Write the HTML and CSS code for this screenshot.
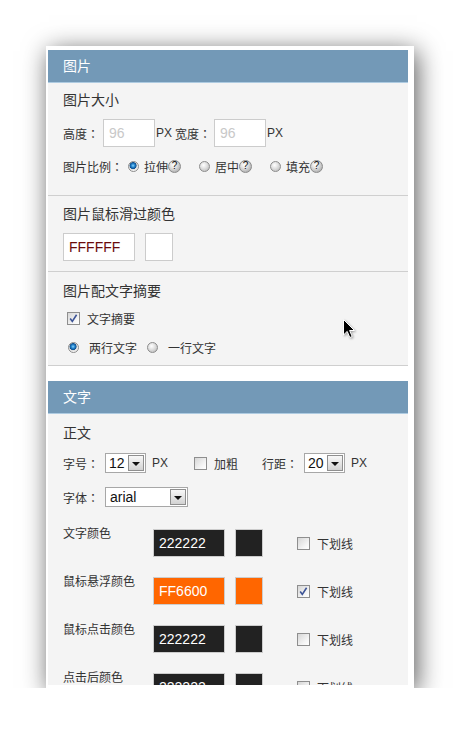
FILE: index.html
```html
<!DOCTYPE html>
<html lang="zh-CN">
<head>
<meta charset="utf-8">
<title>设置</title>
<link rel="stylesheet" href="styles.css">
</head>
<body>
<div class="frame">
  <div class="viewport">
    <section class="panel">
      <div class="panel-head">图片</div>
      <div class="panel-body">
        <div class="block block-size">
          <div class="title t-size">图片大小</div>
          <div class="row row-size">
            <span class="lbl lbl-h">高度<span class="colon">：</span></span>
            <input class="num" type="text" placeholder="96">
            <span class="unit">PX</span>
            <span class="lbl lbl-w">宽度<span class="colon">：</span></span>
            <input class="num" type="text" placeholder="96">
            <span class="unit">PX</span>
          </div>
          <div class="row row-ratio">
            <span class="lbl lbl-ratio">图片比例<span class="colon">：</span></span>
            <span class="opt"><span class="radio on"></span><span class="opt-txt">拉伸</span><span class="help">?</span></span>
            <span class="opt"><span class="radio"></span><span class="opt-txt">居中</span><span class="help">?</span></span>
            <span class="opt"><span class="radio"></span><span class="opt-txt">填充</span><span class="help">?</span></span>
          </div>
        </div>
        <div class="block block-hover">
          <div class="title t-hover">图片鼠标滑过颜色</div>
          <div class="row row-color">
            <input class="color-in light" type="text" value="FFFFFF">
            <span class="swatch sw-white"></span>
          </div>
        </div>
        <div class="block block-summary">
          <div class="title t-summary">图片配文字摘要</div>
          <div class="row row-check">
            <span class="check on"><svg viewBox="0 0 13 13" width="13" height="13"><path d="M3.2 6.6 L5.3 9.4 L9.6 2.8" fill="none" stroke="#3d5496" stroke-width="1.6"/></svg></span>
            <span class="check-txt">文字摘要</span>
          </div>
          <div class="row row-lines">
            <span class="radio on r-two"></span><span class="opt-txt2">两行文字</span>
            <span class="radio r-one"></span><span class="opt-txt2">一行文字</span>
          </div>
        </div>
      </div>
    </section>

    <section class="panel">
      <div class="panel-head">文字</div>
      <div class="panel-body">
        <div class="block block-text">
          <div class="title t-body">正文</div>
          <div class="row row-font">
            <span class="lbl">字号<span class="colon">：</span></span>
            <span class="select sel-s"><span class="sel-val">12</span><span class="sel-btn"><span class="tri"></span></span></span>
            <span class="unit unit-gap">PX</span>
            <span class="check bold-check"></span>
            <span class="check-txt">加粗</span>
            <span class="lbl lbl-lh">行距<span class="colon">：</span></span>
            <span class="select sel-s"><span class="sel-val">20</span><span class="sel-btn"><span class="tri"></span></span></span>
            <span class="unit unit-gap">PX</span>
          </div>
          <div class="row row-family">
            <span class="lbl">字体<span class="colon">：</span></span>
            <span class="select sel-l"><span class="sel-val">arial</span><span class="sel-btn"><span class="tri"></span></span></span>
          </div>
          <div class="color-rows">
            <div class="crow">
              <span class="clbl">文字颜色</span>
              <div class="cctl">
                <input class="color-in dark" type="text" value="222222">
                <span class="swatch sw-dark"></span>
                <span class="check ul-check"></span>
                <span class="check-txt">下划线</span>
              </div>
            </div>
            <div class="crow">
              <span class="clbl">鼠标悬浮颜色</span>
              <div class="cctl">
                <input class="color-in orange" type="text" value="FF6600">
                <span class="swatch sw-orange"></span>
                <span class="check ul-check on"><svg viewBox="0 0 13 13" width="13" height="13"><path d="M3.2 6.6 L5.3 9.4 L9.6 2.8" fill="none" stroke="#3d5496" stroke-width="1.6"/></svg></span>
                <span class="check-txt">下划线</span>
              </div>
            </div>
            <div class="crow">
              <span class="clbl">鼠标点击颜色</span>
              <div class="cctl">
                <input class="color-in dark" type="text" value="222222">
                <span class="swatch sw-dark"></span>
                <span class="check ul-check"></span>
                <span class="check-txt">下划线</span>
              </div>
            </div>
            <div class="crow">
              <span class="clbl">点击后颜色</span>
              <div class="cctl">
                <input class="color-in dark" type="text" value="222222">
                <span class="swatch sw-dark"></span>
                <span class="check ul-check"></span>
                <span class="check-txt">下划线</span>
              </div>
            </div>
          </div>
        </div>
      </div>
    </section>
  </div>
  <svg class="cursor" viewBox="0 0 13 20" width="13" height="20"><path d="M0.5 0.5 L0.5 16 L4.2 12.4 L6.8 18.5 L9.2 17.5 L6.6 11.5 L11.5 11.5 Z" fill="#000" stroke="#fff" stroke-width="1" stroke-linejoin="miter"/></svg>
</div>
</body>
</html>
```

FILE: styles.css
```css
html, body {
  margin: 0;
  padding: 0;
  background: #ffffff;
}

body {
  font-family: "Liberation Sans", "Noto Sans CJK SC", sans-serif;
  font-size: 12px;
  color: #333;
}

.frame {
  position: relative;
  margin: 46px 0 0 46px;
  width: 368px;
  height: 642px;
  box-sizing: border-box;
  padding: 4px 6px 3px 2px;
  background: #ffffff;
  box-shadow: 3px 5px 24px rgba(0, 0, 0, 0.65);
}

.viewport {
  height: 635px;
  overflow: hidden;
}

.panel {
  margin-bottom: 15px;
}

.panel-head {
  height: 32px;
  line-height: 32px;
  padding-left: 15px;
  background: #7399b7;
  border-bottom: 1px solid #aecbe1;
  color: #ffffff;
  font-size: 14px;
}

.panel-body {
  background: #f4f4f4;
}

.block {
  padding: 0 15px;
  border-bottom: 1px solid #cfcfcf;
}

.block-size { padding-bottom: 15px; }
.block-hover { padding-bottom: 10px; }
.block-summary { padding-bottom: 7px; }
.block-text { border-bottom: 0; }

.title {
  font-size: 14px;
  color: #333;
}

.t-size { height: 34px; line-height: 34px; }
.t-hover { height: 36px; line-height: 36px; }
.t-summary { height: 38px; line-height: 38px; }
.t-body { height: 38px; line-height: 38px; }

.row {
  display: flex;
  align-items: center;
}

.row-size { height: 28px; margin-top: 2px; }
.row-ratio { height: 28px; margin-top: 5px; }
.row-color { height: 28px; margin-top: 1px; }
.row-check { height: 16px; padding-left: 4px; }
.row-lines { height: 22px; margin-top: 10px; padding-left: 5px; }
.row-font { height: 22px; }
.row-family { height: 22px; margin-top: 12px; }

.lbl {
  white-space: nowrap;
  margin-right: 6px;
}

.colon {
  display: inline-block;
  width: 12px;
  text-align: center;
  font-family: "Noto Sans CJK TC", "Noto Sans CJK SC", sans-serif;
}

.lbl-h { margin-right: 4px; }
.lbl-w { margin-left: 3px; margin-right: 3px; }
.lbl-ratio { margin-right: 5px; }
.lbl-lh { margin-left: 24px; }

.num {
  width: 52px;
  height: 28px;
  box-sizing: border-box;
  border: 1px solid #cccccc;
  background: #ffffff;
  padding: 0 0 0 5px;
  margin: 0 1px 0 0;
  font-family: "Liberation Sans", sans-serif;
  font-size: 14px;
  color: #333;
  outline: none;
}

.num::placeholder {
  color: #c8c8c8;
}

.unit {
  font-size: 12px;
  color: #333;
}

.unit-gap {
  margin-left: 6px;
}

.opt {
  display: flex;
  align-items: center;
  margin-right: 18px;
}

.radio {
  display: inline-block;
  width: 11px;
  height: 11px;
  box-sizing: border-box;
  border-radius: 50%;
  border: 1px solid #8c8c8c;
  background: radial-gradient(circle at 40% 35%, #ffffff 0, #e4e4e4 3px, #c6c6c6 6px);
}

.radio.on {
  background: radial-gradient(circle at 45% 40%, #8ad6ff 0, #2a8ad2 1.6px, #0c4f90 3.2px, #dcdcdc 3.8px, #f2f2f2 5px);
}

.opt-txt {
  margin-left: 5px;
}

.help {
  display: inline-flex;
  align-items: center;
  justify-content: center;
  width: 13px;
  height: 13px;
  box-sizing: border-box;
  border-radius: 50%;
  border: 1px solid #8a8a8a;
  background: radial-gradient(circle at 40% 35%, #ffffff 0, #e6e6e6 3px, #b8b8b8 7px);
  font-family: "Liberation Sans", sans-serif;
  font-size: 10px;
  line-height: 1;
  color: #111;
}

.color-in {
  width: 72px;
  height: 28px;
  box-sizing: border-box;
  border: 1px solid #cccccc;
  padding: 0 0 0 5px;
  margin: 0;
  font-family: "Liberation Sans", sans-serif;
  font-size: 14px;
  outline: none;
}

.color-in.light {
  background: #ffffff;
  color: #6a0a0a;
}

.color-in.dark {
  background: #222222;
  color: #ffffff;
}

.color-in.orange {
  background: #ff6600;
  color: #ffffff;
}

.swatch {
  display: inline-block;
  width: 28px;
  height: 28px;
  box-sizing: border-box;
  border: 1px solid #cccccc;
  margin-left: 10px;
}

.sw-white { background: #ffffff; }
.sw-dark { background: #222222; }
.sw-orange { background: #ff6600; }

.check {
  display: inline-block;
  width: 13px;
  height: 13px;
  box-sizing: border-box;
  border: 1px solid #8e8e8e;
  background: linear-gradient(135deg, #d6d6d6 0%, #f6f6f6 70%, #ffffff 100%);
  position: relative;
}

.check svg {
  position: absolute;
  left: -1px;
  top: -1px;
}

.check-txt {
  margin-left: 7px;
}

.r-two { margin-right: 0; }
.opt-txt2 { margin-left: 10px; }
.r-one { margin-left: 10px; }

.bold-check { margin-left: 26px; }

.select {
  display: inline-flex;
  align-items: center;
  height: 20px;
  box-sizing: border-box;
  border: 1px solid #a7a7a7;
  background: #ffffff;
}

.sel-s { width: 41px; }
.sel-l { width: 83px; }

.sel-val {
  flex: 1;
  padding-left: 3px;
  font-family: "Liberation Sans", sans-serif;
  font-size: 14px;
  color: #111;
  line-height: 18px;
}

.sel-l .sel-val { padding-left: 4px; }

.sel-btn {
  width: 16px;
  height: 16px;
  margin-right: 1px;
  box-sizing: border-box;
  border: 1px solid #8f8f8f;
  background: linear-gradient(#f8f8f8, #d2d2d2);
  display: flex;
  align-items: center;
  justify-content: center;
}

.tri {
  width: 0;
  height: 0;
  border-left: 4px solid transparent;
  border-right: 4px solid transparent;
  border-top: 4px solid #111;
  margin-top: 1px;
}

.color-rows {
  margin-top: 13px;
}

.crow {
  display: flex;
  align-items: flex-start;
  height: 48px;
}

.clbl {
  width: 90px;
  line-height: 26px;
  white-space: nowrap;
}

.cctl {
  display: flex;
  align-items: center;
  height: 28px;
  margin-top: 8px;
}

.ul-check {
  margin-left: 34px;
}

.cursor {
  position: absolute;
  left: 297px;
  top: 273px;
  filter: drop-shadow(1px 1px 1px rgba(0, 0, 0, 0.35));
}
```
